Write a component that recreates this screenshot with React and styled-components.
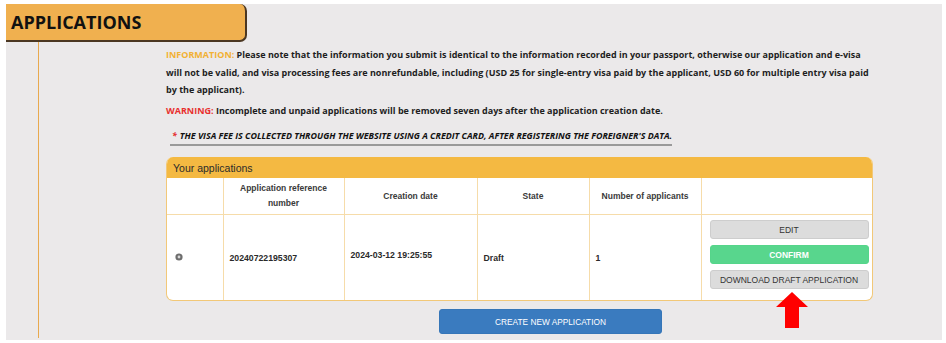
import React from "react";
import styled, { createGlobalStyle } from "styled-components";

const Global = createGlobalStyle`
  html, body { margin: 0; padding: 0; background: #ffffff; }
  body { width: 946px; height: 343px; overflow: hidden; }
`;

const Page = styled.div`
  padding: 4px 4px 0 6px;
`;

const Panel = styled.div`
  background: #ebe9ea;
  height: 336px;
  display: flex;
  flex-direction: column;
`;

const TitleTab = styled.div`
  width: 239px;
  height: 36px;
  box-sizing: content-box;
  background: #f0b04f;
  border-right: 2px solid #4b3722;
  border-bottom: 2px solid #4b3722;
  border-radius: 0 7px 7px 0;
  display: flex;
  align-items: center;
`;

const Title = styled.h1`
  margin: 0 0 0 5px;
  font-family: "Open Sans", sans-serif;
  font-weight: 700;
  font-size: 18px;
  color: #111;
`;

const Body = styled.div`
  flex: 1;
  margin-left: 32px;
  border-left: 1px solid #e8a94e;
  margin-bottom: 2px;
  padding: 4px 0 0 127px;
`;

const Content = styled.div`
  width: 707px;
  position: relative;
`;

const Para = styled.p`
  margin: 0 0 3px 0;
  font-family: "Open Sans", sans-serif;
  font-weight: 700;
  font-size: 9px;
  line-height: 17.6px;
  color: #1e1e1e;
  width: 712px;
`;

const Label = styled.span`
  color: ${(p) => p.$color};
`;

const Notice = styled.div`
  margin: 6px 0 0 4px;
  display: inline-block;
  font-family: "Open Sans", sans-serif;
  font-weight: 700;
  font-style: italic;
  font-size: 8.9px;
  line-height: 15px;
  color: #111;
  padding: 0 0 1px 2px;
  border-bottom: 2px solid #9a9a9a;
`;

const Star = styled.span`
  color: #e42c2c;
  margin-right: 3px;
`;

const Card = styled.div`
  margin-top: 11px;
  border: 1px solid #f2c878;
  border-top: none;
  border-radius: 7px;
  background: #fff;
  overflow: hidden;
`;

const CardHeader = styled.div`
  background: #f4b942;
  height: 21px;
  display: flex;
  align-items: center;
  padding-left: 6px;
  font-family: "Liberation Sans", Arial, sans-serif;
  font-size: 10.5px;
  color: #2b2b2b;
`;

const Table = styled.table`
  width: 100%;
  border-collapse: collapse;
  table-layout: fixed;
  font-family: "Liberation Sans", Arial, sans-serif;
`;

const Th = styled.th`
  height: 36px;
  border-left: 1px solid #f6dcaa;
  border-bottom: 1px solid #f6dcaa;
  font-size: 8.5px;
  font-weight: 700;
  line-height: 15px;
  color: #3a3a3a;
  text-align: center;
  padding: 0 ${(p) => (p.$tight ? 4 : 14)}px;
  &:first-child { border-left: none; }
`;

const Td = styled.td`
  height: 80px;
  border-left: 1px solid #f6dcaa;
  font-size: 8.7px;
  color: #2a2a2a;
  font-weight: ${(p) => (p.$bold ? 700 : 400)};
  padding: 0 ${(p) => p.$pr || 6}px ${(p) => p.$pb || 0}px ${(p) => p.$pl || 6}px;
  vertical-align: middle;
  &:first-child { border-left: none; }
`;

const Actions = styled.div`
  display: flex;
  flex-direction: column;
  gap: 6px;
  padding: 2px 0 8px 0;
`;

const Btn = styled.button`
  height: 19px;
  width: 159px;
  border-radius: 3px;
  border: 1px solid ${(p) => (p.$green ? "#55d58a" : "#cdcdcd")};
  background: ${(p) => (p.$green ? "#58d68d" : "#dcdcdc")};
  color: ${(p) => (p.$green ? "#ffffff" : "#333")};
  font-family: "Liberation Sans", Arial, sans-serif;
  font-size: 8.5px;
  font-weight: ${(p) => (p.$green ? 700 : 400)};
  padding: 0;
  cursor: pointer;
`;

const CreateBtn = styled.button`
  display: block;
  margin: 8px 0 0 273px;
  width: 223px;
  height: 25px;
  border: 1px solid #3676b8;
  border-radius: 3px;
  background: #3a7bbf;
  color: #fff;
  font-family: "Liberation Sans", Arial, sans-serif;
  font-size: 8.3px;
  padding: 0;
`;

const Arrow = styled.svg`
  position: absolute;
  left: 610px;
  top: 246px;
`;

const Dot = () => (
  <svg width="8" height="8" viewBox="0 0 8 8">
    <circle cx="4" cy="4" r="3.6" fill="#6e6e6e" />
    <circle cx="4" cy="4" r="1.4" fill="#d8d8d8" />
  </svg>
);

export default function App() {
  return (
    <>
      <Global />
      <Page>
        <Panel>
          <TitleTab>
            <Title>APPLICATIONS</Title>
          </TitleTab>
          <Body>
            <Content>
              <Para>
                <Label $color="#f2b134">INFORMATION:</Label> Please note that the information you submit is
                identical to the information recorded in your passport, otherwise our application and e-visa
                will not be valid, and visa processing fees are nonrefundable, including (USD 25 for
                single-entry visa paid by the applicant, USD 60 for multiple entry visa paid by the applicant).
              </Para>
              <Para>
                <Label $color="#e8302e">WARNING:</Label> Incomplete and unpaid applications will be removed
                seven days after the application creation date.
              </Para>
              <Notice>
                <Star>*</Star>THE VISA FEE IS COLLECTED THROUGH THE WEBSITE USING A CREDIT CARD, AFTER
                REGISTERING THE FOREIGNER'S DATA.
              </Notice>
              <Card>
                <CardHeader>Your applications</CardHeader>
                <Table>
                  <colgroup>
                    <col style={{ width: 56 }} />
                    <col style={{ width: 121 }} />
                    <col style={{ width: 133 }} />
                    <col style={{ width: 112 }} />
                    <col style={{ width: 112 }} />
                    <col />
                  </colgroup>
                  <thead>
                    <tr>
                      <Th />
                      <Th>Application reference number</Th>
                      <Th>Creation date</Th>
                      <Th>State</Th>
                      <Th $tight>Number of applicants</Th>
                      <Th />
                    </tr>
                  </thead>
                  <tbody>
                    <tr>
                      <Td $pl={8}>
                        <Dot />
                      </Td>
                      <Td $bold>20240722195307</Td>
                      <Td $bold $pb={5}>2024-03-12 19:25:55</Td>
                      <Td $bold>Draft</Td>
                      <Td $bold>1</Td>
                      <Td $pl={8} $pr={4}>
                        <Actions>
                          <Btn>EDIT</Btn>
                          <Btn $green>CONFIRM</Btn>
                          <Btn>DOWNLOAD DRAFT APPLICATION</Btn>
                        </Actions>
                      </Td>
                    </tr>
                  </tbody>
                </Table>
              </Card>
              <CreateBtn>CREATE NEW APPLICATION</CreateBtn>
              <Arrow width="32" height="36" viewBox="0 0 32 36">
                <polygon points="16,0 32,15 23,15 23,36 9,36 9,15 0,15" fill="#ff0000" />
              </Arrow>
            </Content>
          </Body>
        </Panel>
      </Page>
    </>
  );
}
